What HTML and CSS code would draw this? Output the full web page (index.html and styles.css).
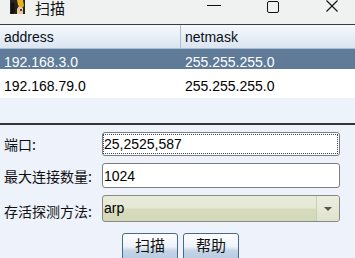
FILE: index.html
```html
<!DOCTYPE html>
<html lang="zh-CN">
<head>
<meta charset="utf-8">
<link rel="stylesheet" href="styles.css">
</head>
<body>
<div class="window">
  <div class="titlebar">
    <svg class="app-icon" width="15" height="14" viewBox="0 0 15 14">
      <rect x="0" y="0" width="15" height="14" fill="#2a241c"/>
      <path d="M7 0 L13 0 L14 6 L11 9 L8 5 Z" fill="#e8b020"/>
      <path d="M9 6 L13 8 L13 14 L7 14 L7 9 Z" fill="#e9c9a6"/>
      <path d="M1 3 L4 2 L5 12 L2 14 L1 14 Z" fill="#111"/>
      <rect x="10" y="9" width="2" height="2" fill="#5a3a2a"/>
    </svg>
    <span class="title">扫描</span>
    <div class="controls">
      <span class="ctl-min"></span>
      <span class="ctl-max"></span>
      <svg class="ctl-close" width="12" height="12" viewBox="0 0 12 12">
        <path d="M0.5 0.5 L11.5 11.5 M11.5 0.5 L0.5 11.5" stroke="#111" stroke-width="1.1" fill="none"/>
      </svg>
    </div>
  </div>

  <div class="table">
    <div class="thead">
      <div class="cell c1">address</div>
      <div class="cell c2">netmask</div>
    </div>
    <div class="row row-sel">
      <div class="cell c1">192.168.3.0</div>
      <div class="cell c2">255.255.255.0</div>
    </div>
    <div class="row row-plain">
      <div class="cell c1">192.168.79.0</div>
      <div class="cell c2">255.255.255.0</div>
    </div>
  </div>

  <div class="form">
    <div class="field">
      <label class="lbl">端口:</label>
      <div class="input input-focus"><span class="focus-ring">25,2525,587</span></div>
    </div>
    <div class="field">
      <label class="lbl">最大连接数量:</label>
      <div class="input input-2">1024</div>
    </div>
    <div class="field">
      <label class="lbl">存活探测方法:</label>
      <div class="combo">
        <span class="combo-text">arp</span>
        <span class="combo-btn"><span class="tri"></span></span>
      </div>
    </div>
    <div class="buttons">
      <button class="btn">扫描</button>
      <button class="btn">帮助</button>
    </div>
  </div>
</div>
</body>
</html>
```
FILE: styles.css
```css
html, body {
  margin: 0;
  padding: 0;
}
body {
  width: 355px;
  height: 258px;
  overflow: hidden;
  background: #eef2fb;
  font-family: "Liberation Sans", Arial, "Noto Sans CJK SC", sans-serif;
  font-size: 14px;
  color: #000;
}
.window {
  width: 355px;
}
.titlebar {
  height: 24px;
  background: #f0f1f1;
  border-bottom: 1px solid #3c3c3c;
  display: flex;
  align-items: flex-start;
}
.app-icon {
  margin-left: 10px;
  display: block;
}
.title {
  margin-left: 10px;
  margin-top: 0;
  font-family: "Noto Sans CJK SC", sans-serif;
  font-size: 15px;
  line-height: 15px;
  color: #111;
}
.controls {
  margin-left: auto;
  display: flex;
  align-items: flex-start;
  height: 14px;
}
.ctl-min {
  display: block;
  width: 14px;
  height: 1px;
  background: #111;
  margin-top: 5px;
}
.ctl-max {
  display: block;
  width: 10px;
  height: 10px;
  border: 1px solid #111;
  border-radius: 2px;
  margin-left: 46px;
  margin-top: 1px;
}
.ctl-close {
  display: block;
  margin-left: 47px;
  margin-right: 17px;
}

.table {
  background: #eef2fb;
  height: 98px;
  border-bottom: 2px solid #353535;
}
.thead {
  display: flex;
  height: 20px;
  padding-top: 3px;
  background: linear-gradient(#f6f9fd, #dbe4f0);
  border-bottom: 1px solid #a9bfd6;
  line-height: 19px;
  color: #0a1020;
}
.cell {
  padding-left: 4px;
  white-space: nowrap;
}
.c1 {
  width: 176px;
}
.c2 {
  flex: 1;
}
.thead .c2 {
  border-left: 1px solid #a9bfd6;
  margin-top: -3px;
  padding-top: 3px;
}
.row .c2 {
  margin-left: 1px;
}
.row {
  display: flex;
}
.row-sel {
  background: #5f7b98;
  color: #fff;
  height: 16px;
  padding-top: 4px;
  line-height: 18px;
}
.row-plain {
  background: #fff;
  height: 20px;
  padding-top: 9px;
  line-height: 17px;
}

.form {
  padding-top: 7px;
  display: flex;
  flex-direction: column;
}
.field {
  display: flex;
  align-items: center;
  margin-bottom: 7px;
}
.lbl {
  width: 102px;
  padding-left: 4px;
  box-sizing: border-box;
  font-family: "Noto Sans CJK SC", sans-serif;
  font-size: 14px;
  color: #111;
  white-space: nowrap;
}
.input {
  box-sizing: border-box;
  width: 238px;
  height: 24px;
  border: 1px solid #7d7d7d;
  border-radius: 3px;
  background: #fff;
  padding: 1px 1px 1px 0;
  line-height: 20px;
}
.input-2 {
  height: 25px;
  padding-top: 2px;
  padding-left: 1px;
}
.focus-ring {
  display: block;
  height: 20px;
  border: 1px dotted #3c4a60;
  box-sizing: border-box;
  line-height: 18px;
}
.combo {
  box-sizing: border-box;
  width: 238px;
  height: 27px;
  border: 1px solid #8a8a80;
  border-radius: 3px;
  background: linear-gradient(#e8ebda 0%, #e4e8d3 48%, #d6dbbe 52%, #d4d9bb 100%);
  display: flex;
  align-items: stretch;
  margin-bottom: 4px;
}
.combo-text {
  flex: 1;
  padding-left: 1px;
  line-height: 25px;
}
.combo-btn {
  width: 22px;
  border-left: 1px solid #c9ceb6;
  border-radius: 0 2px 2px 0;
  background: linear-gradient(#ecefe0, #dfe3cc);
  display: flex;
  align-items: center;
  justify-content: center;
}
.tri {
  width: 0;
  height: 0;
  border-left: 4px solid transparent;
  border-right: 4px solid transparent;
  border-top: 4px solid #555;
}
.buttons {
  display: flex;
  padding-left: 122px;
  gap: 5px;
}
.btn {
  width: 56px;
  height: 30px;
  box-sizing: border-box;
  border: 1px solid #4a6a8c;
  border-radius: 3px;
  background: linear-gradient(#fdfeff 0%, #eef3f9 45%, #c3d4e6 60%, #b4c8de 100%);
  font-family: "Noto Sans CJK SC", sans-serif;
  font-size: 15px;
  color: #111;
  padding: 0 0 6px 0;
  line-height: 20px;
}
```
